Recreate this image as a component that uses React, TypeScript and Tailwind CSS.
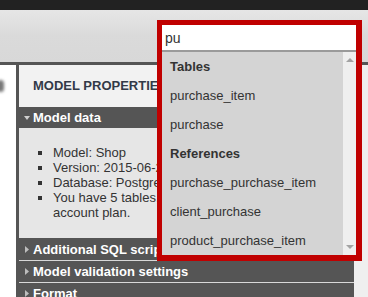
import React from "react";

const font = "font-['Liberation_Sans',Arial,sans-serif]";

function TriRight() {
  return (
    <svg width="4" height="7" viewBox="0 0 4 7" className="shrink-0 ml-[1px]">
      <polygon points="0,0 4,3.5 0,7" fill="#bdbdbd" />
    </svg>
  );
}

function TriDown() {
  return (
    <svg width="6" height="4" viewBox="0 0 6 4" className="shrink-0">
      <polygon points="0,0 6,0 3,4" fill="#d0d0d0" />
    </svg>
  );
}

function SectionRow({ label, down, h }: { label: string; down?: boolean; h: string }) {
  return (
    <div className={`flex items-center shrink-0 bg-[#555555] pl-[5px] ${h}`}>
      <div className="w-[9px] flex justify-start">{down ? <TriDown /> : <TriRight />}</div>
      <span className="text-[13px] font-bold text-white leading-none whitespace-nowrap">{label}</span>
    </div>
  );
}

export default function App() {
  const items: { t: string; bold?: boolean }[] = [
    { t: "Tables", bold: true },
    { t: "purchase_item" },
    { t: "purchase" },
    { t: "References", bold: true },
    { t: "purchase_purchase_item" },
    { t: "client_purchase" },
    { t: "product_purchase_item" },
  ];
  return (
    <div className={`relative w-[368px] h-[297px] overflow-hidden bg-[#efefef] ${font}`}>
      <div className="h-[10px] bg-[#222222]" />
      <div className="h-[52px] bg-gradient-to-b from-[#e6e6e6] via-[#dadada] to-[#d8d8d8]" />
      <div className="h-[3px] bg-[#555555]" />
      <div className="flex h-[232px]">
        <div className="w-[16px] bg-white relative shrink-0">
          <div className="absolute left-[-3px] top-[15px] w-[7px] h-[12px] rounded-full bg-[#777] blur-[1.5px]" />
        </div>
        <div className="w-[3px] bg-[#555555] shrink-0" />
        <div className="w-[335px] flex flex-col shrink-0">
          <div className="h-[42px] shrink-0 bg-[#f2f2f2] pl-[14px] flex items-center">
            <span className="text-[13px] font-bold text-[#333a48] whitespace-nowrap">MODEL PROPERTIES</span>
          </div>
          <SectionRow label="Model data" down h="h-[21px]" />
          <div className="h-[110px] shrink-0 bg-[#e6e6e6] pt-[17px]">
            <ul className="list-[square] pl-[34px] text-[13px] leading-[15px] text-[#333333]">
              <li>Model: Shop</li>
              <li>Version: 2015-06-24 12:30</li>
              <li>Database: PostgreSQL 9.3</li>
              <li>
                You have 5 tables, the limit for your current
                <br />
                account plan.
              </li>
            </ul>
          </div>
          <SectionRow label="Additional SQL scripts" h="h-[22px]" />
          <div className="h-[1px] shrink-0 bg-[#d8d8d8]" />
          <SectionRow label="Model validation settings" h="h-[21px]" />
          <div className="h-[1px] shrink-0 bg-[#d8d8d8]" />
          <SectionRow label="Format" h="h-[21px]" />
        </div>
      </div>

      <div className="absolute left-[157px] top-[20px] w-[205px] h-[241px] border-[5px] border-r-[6px] border-b-[6px] border-[#c00000] flex flex-col bg-[#d4d4d4]">
        <div className="h-[27px] bg-white border-b-2 border-[#9a9a9a] flex items-center pl-[3px] shrink-0">
          <span className="text-[14px] text-[#333] leading-none">pu</span>
        </div>
        <div className="flex flex-1 min-h-0">
          <div className="flex-1 flex flex-col">
            {items.map((it) => (
              <div key={it.t} className="h-[29px] flex items-center pl-[8px] shrink-0">
                <span className={`text-[13px] leading-none text-[#333] whitespace-nowrap ${it.bold ? "font-bold" : ""}`}>{it.t}</span>
              </div>
            ))}
          </div>
          <div className="w-[13px] bg-[#efefef] flex flex-col items-center justify-between pt-[6px] pb-[6px]">
            <svg width="8" height="4" viewBox="0 0 8 4">
              <polygon points="0,4 8,4 4,0" fill="#a3a3a3" />
            </svg>
            <svg width="8" height="4" viewBox="0 0 8 4">
              <polygon points="0,0 8,0 4,4" fill="#a3a3a3" />
            </svg>
          </div>
        </div>
      </div>
    </div>
  );
}
